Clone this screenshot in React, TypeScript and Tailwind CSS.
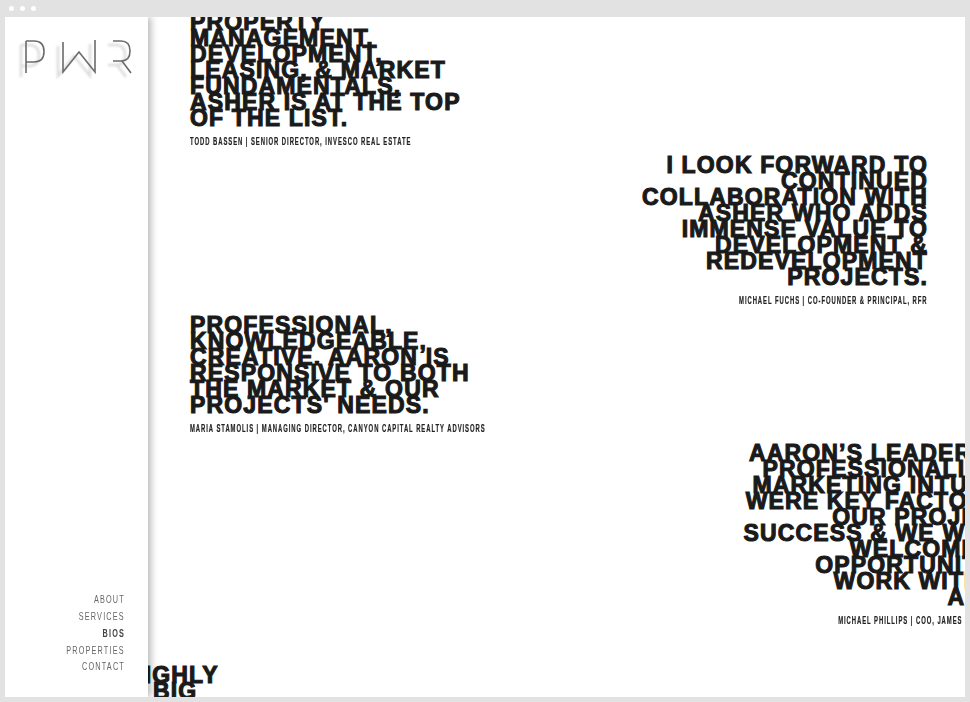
const quoteClass =
  "font-['Liberation_Sans',Arial,sans-serif] font-bold text-[23px] leading-[16px] tracking-[1.15px] text-[#1a1a1a] [-webkit-text-stroke:1.1px_#1a1a1a] whitespace-nowrap";
const creditClass =
  "font-['Liberation_Sans',Arial,sans-serif] font-bold text-[10px] leading-[12px] tracking-[1.6px] text-[#222] whitespace-nowrap scale-x-[0.59] [-webkit-text-stroke:0.2px_#222]";

const navItems = ["ABOUT", "SERVICES", "BIOS", "PROPERTIES", "CONTACT"];

const Quote = ({
  lines,
  credit,
  right,
  className,
}: {
  lines: string[];
  credit: string;
  right?: boolean;
  className: string;
}) => (
  <div className={className}>
    <div className={right ? "text-right" : "text-left"}>
      {lines.map((line) => (
        <div key={line} className={quoteClass}>
          {line}
        </div>
      ))}
    </div>
    <div className={`mt-[10px] flex ${right ? "justify-end" : "justify-start"}`}>
      <div className={`${creditClass} ${right ? "origin-right" : "origin-left"}`}>{credit}</div>
    </div>
  </div>
);

const Logo = () => {
  const strokes = (
    <>
      <path d="M26 41V73M26 41H34Q44 41 44 51.500Q44 62 34 62H26" />
      <path d="M63 42V72L79 52L95 72V40" />
      <path d="M113 41H121Q130 41 130 51Q130 61 121 61H113M122 61L131 73" />
    </>
  );
  return (
    <svg width="140" height="50" viewBox="0 0 140 50" className="block" fill="none">
      <g transform="translate(-5 -34)">
        <g stroke="#d4d4d4" strokeWidth="2.500" transform="translate(-5 4)" opacity="0.8" className="blur-[1px]">
          {strokes}
        </g>
        <g stroke="#6b6b6b" strokeWidth="1.600">{strokes}</g>
      </g>
    </svg>
  );
};

export default function App() {
  return (
    <div className="h-[702px] w-[970px] bg-[#e2e2e2] flex flex-col overflow-hidden">
      <div className="h-[17px] flex items-center gap-[6px] pl-[9px] pb-[1px] shrink-0">
        <span className="w-[5px] h-[5px] rounded-full bg-white" />
        <span className="w-[5px] h-[5px] rounded-full bg-white" />
        <span className="w-[5px] h-[5px] rounded-full bg-white" />
      </div>
      <div className="mx-[5px] h-[680px] bg-white flex overflow-hidden">
        <aside className="relative z-10 w-[143px] shrink-0 bg-white shadow-[3px_0_7px_rgba(0,0,0,0.28)] flex flex-col justify-between">
          <div className="pt-[17px]">
            <Logo />
          </div>
          <nav className="pb-[22px] pr-[23px] flex flex-col items-end">
            {navItems.map((item) => (
              <a
                key={item}
                className={`font-['Liberation_Sans',Arial,sans-serif] text-[11px] leading-[16.7px] tracking-[1.800px] origin-right scale-x-[0.66] ${
                  item === "BIOS" ? "font-bold text-[#444]" : "text-[#666]"
                }`}
              >
                {item}
              </a>
            ))}
          </nav>
        </aside>
        <main className="flex-1 min-w-0 overflow-hidden h-[680px]">
          <Quote
            className="mt-[-3px] ml-[42px]"
            lines={["PROPERTY", "MANAGEMENT,", "DEVELOPMENT,", "LEASING, & MARKET", "FUNDAMENTALS,", "ASHER IS AT THE TOP", "OF THE LIST."]}
            credit="TODD BASSEN | SENIOR DIRECTOR, INVESCO REAL ESTATE"
          />
          <Quote
            className="mt-[9px] mr-[37px]"
            right
            lines={["I LOOK FORWARD TO", "CONTINUED", "COLLABORATION WITH", "ASHER WHO ADDS", "IMMENSE VALUE TO", "DEVELOPMENT &", "REDEVELOPMENT", "PROJECTS."]}
            credit="MICHAEL FUCHS | CO-FOUNDER & PRINCIPAL, RFR"
          />
          <Quote
            className="mt-[10px] ml-[42px]"
            lines={["PROFESSIONAL,", "KNOWLEDGEABLE,", "CREATIVE. AARON IS", "RESPONSIVE TO BOTH", "THE MARKET & OUR", "PROJECTS' NEEDS."]}
            credit="MARIA STAMOLIS | MANAGING DIRECTOR, CANYON CAPITAL REALTY ADVISORS"
          />
          <Quote
            className="mt-[10px] mr-[-70px]"
            right
            lines={["AARON’S LEADERSHIP,", "PROFESSIONALISM, &", "MARKETING INTUITION", "WERE KEY FACTORS IN", "OUR PROJECT’S", "SUCCESS & WE WOULD", "WELCOME THE", "OPPORTUNITY TO", "WORK WITH HIM", "AGAIN."]}
            credit="MICHAEL PHILLIPS | COO, JAMES CAMPBELL CO LLC"
          />
          <div className={`${quoteClass} mt-[40px] ml-[-21px]`}>HIGHLY</div>
          <div className={`${quoteClass} ml-[5px]`}>BIG</div>
        </main>
      </div>
    </div>
  );
}
